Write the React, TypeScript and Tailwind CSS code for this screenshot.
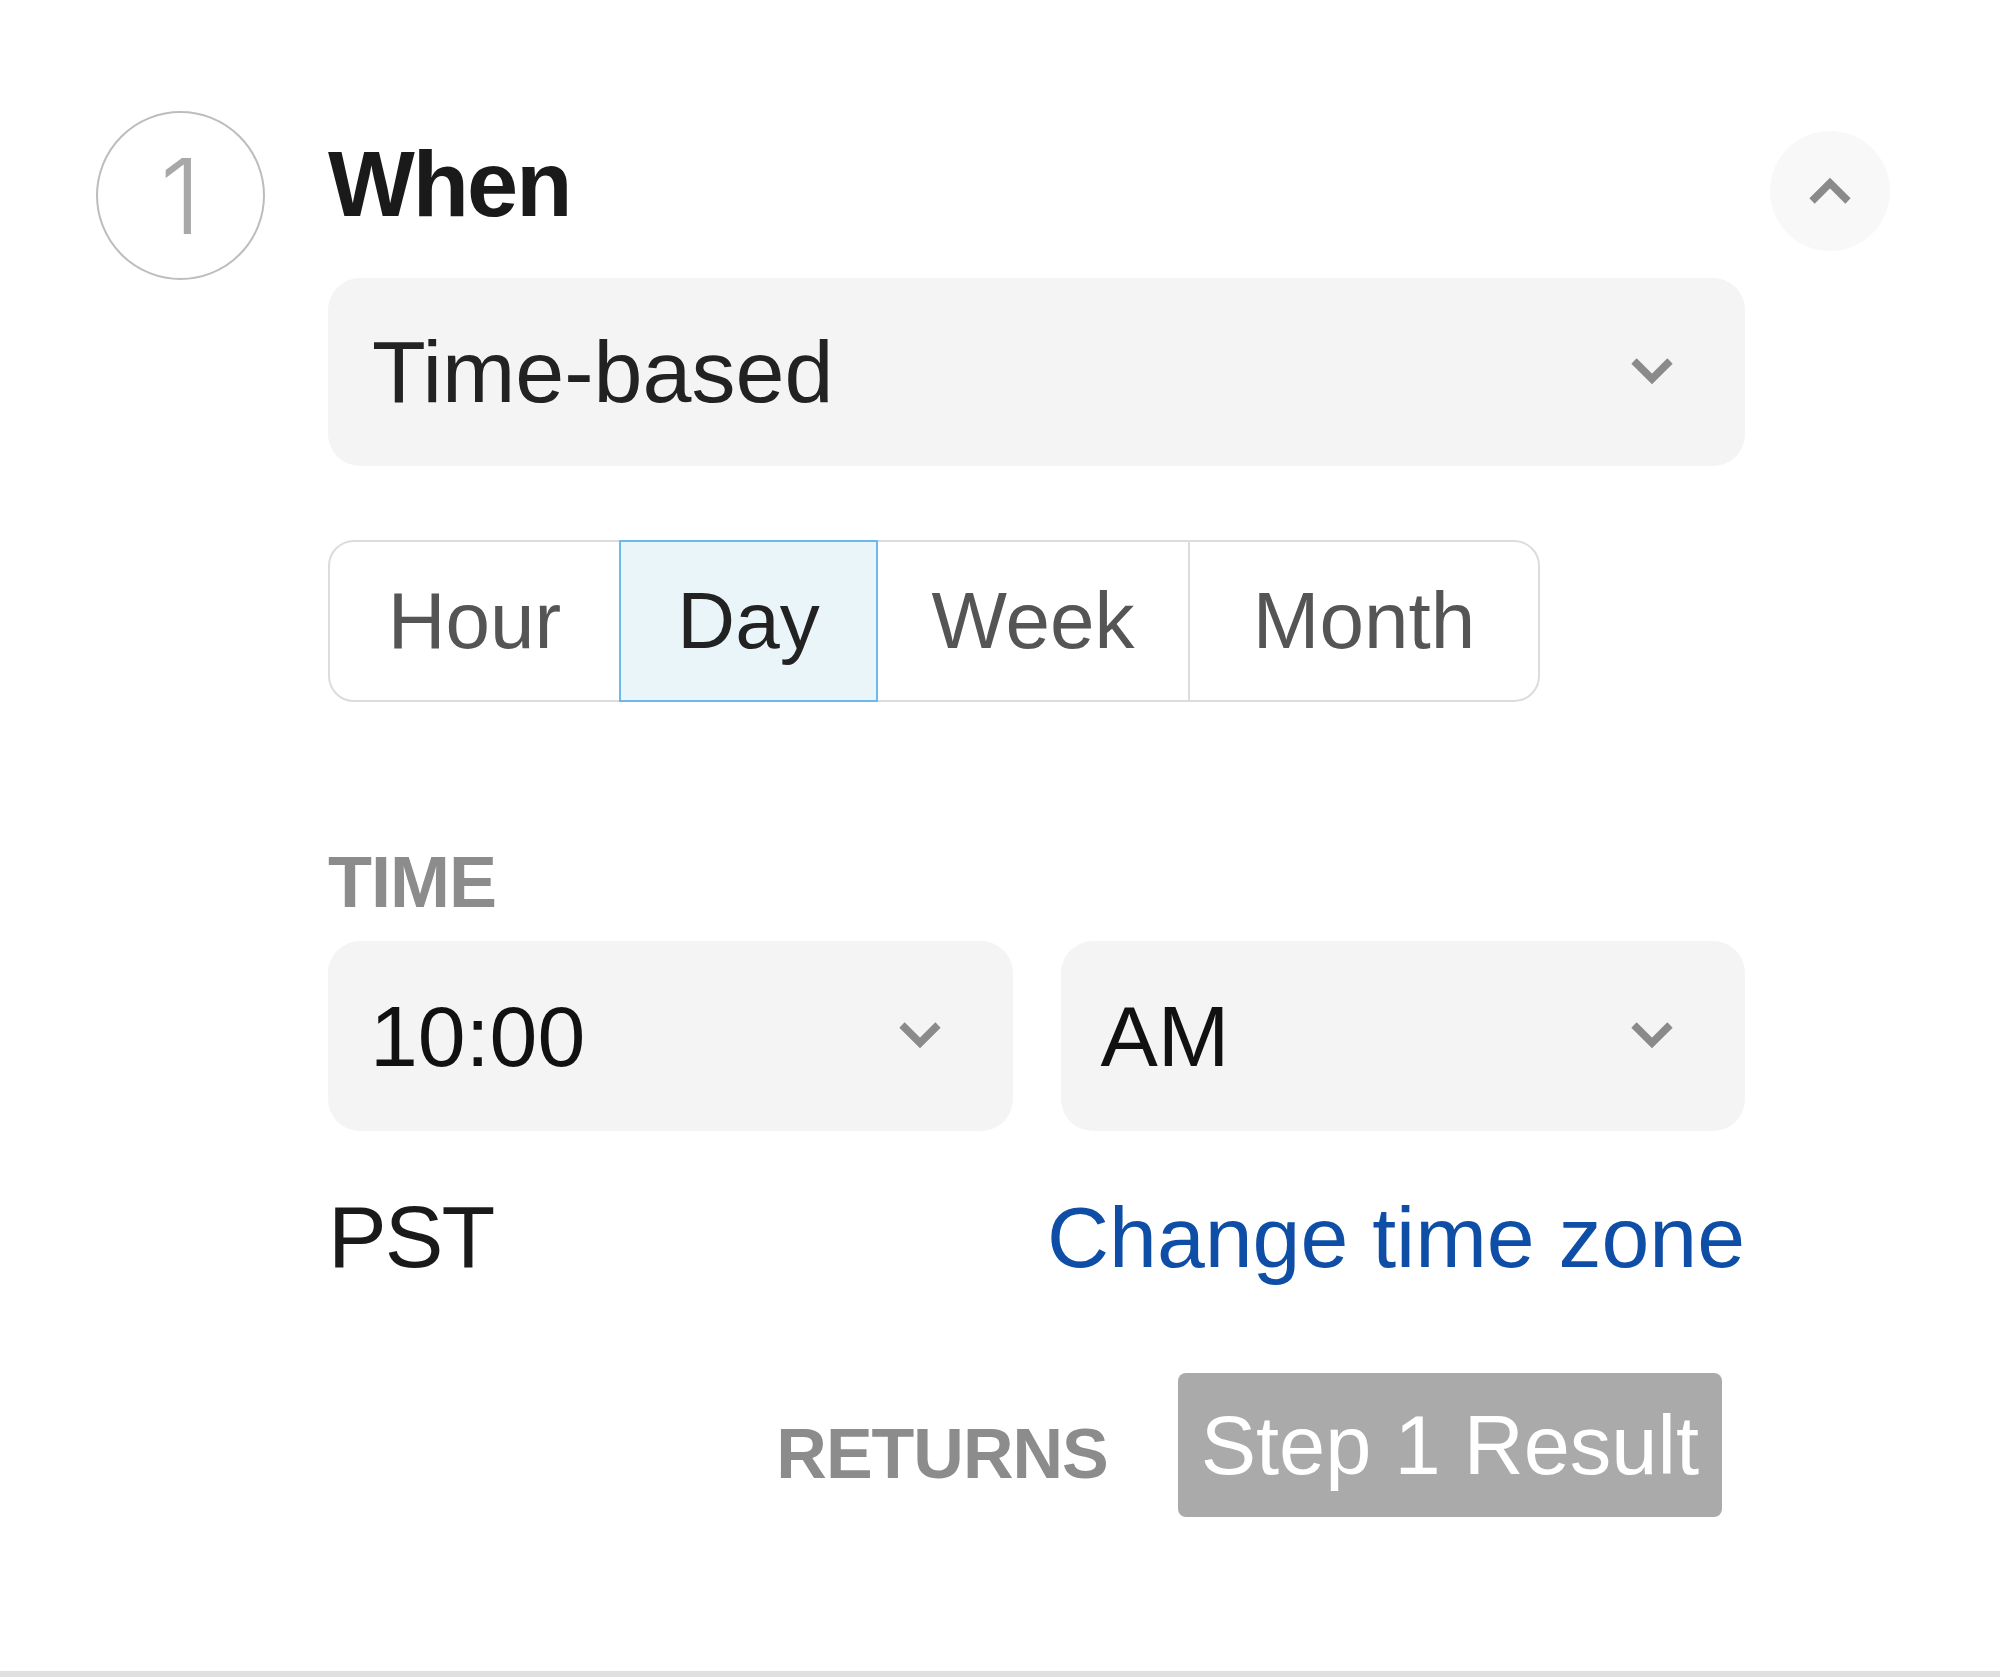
import React from "react";

const Chevron = ({ up = false, className = "" }: { up?: boolean; className?: string }) => (
  <svg viewBox="0 0 46 32" className={className} fill="none">
    <path
      d={up ? "M5 27 L23 9 L41 27" : "M5 5 L23 23 L41 5"}
      stroke="#8a8a8a"
      strokeWidth="7.5"
      strokeLinecap="butt"
      strokeLinejoin="miter"
    />
  </svg>
);

export default function App() {
  const font = { fontFamily: '"Liberation Sans", Arial, sans-serif' };
  return (
    <div
      className="w-[2000px] h-[1677px] bg-white border-b-[6px] border-[#e0e0e0] overflow-hidden"
      style={font}
    >
      <div className="flex pt-[111px] pl-[96px]">
        <div className="w-[169px] h-[169px] shrink-0 rounded-full border-2 border-[#bdbdbd] flex items-center justify-center">
          <span
            className="text-[104px] leading-none font-light text-[#a8a8a8]"
            style={{ fontFamily: "Inter, sans-serif" }}
          >
            1
          </span>
        </div>

        <div className="ml-[63px] w-[1417px] shrink-0 flex flex-col">
          <h2 className="mt-[27px] text-[92px] leading-none font-bold text-[#1a1a1a] tracking-[-2px]">
            When
          </h2>

          <div className="mt-[48px] h-[188px] rounded-[32px] bg-[#f4f4f4] flex items-center justify-between pl-[44px] pr-[70px]">
            <span className="text-[88px] leading-none text-[#222]">Time-based</span>
            <Chevron className="w-[46px] h-[32px]" />
          </div>

          <div className="mt-[74px] h-[162px] w-[1212px] flex rounded-[26px] border-2 border-[#dcdcdc]">
            <div className="w-[289px] flex items-center justify-center text-[80px] leading-none text-[#555]">
              Hour
            </div>
            <div className="w-[259px] flex items-center justify-center text-[80px] leading-none text-[#222] bg-[#eaf5fa] border-2 border-[#6bbbe8] -my-[2px]">
              Day
            </div>
            <div className="w-[312px] flex items-center justify-center text-[80px] leading-none text-[#555] border-r-2 border-[#dcdcdc]">
              Week
            </div>
            <div className="flex-1 flex items-center justify-center text-[80px] leading-none text-[#555]">
              Month
            </div>
          </div>

          <div className="mt-[144px] text-[72px] leading-none font-bold text-[#8c8c8c] tracking-[-1px]">
            TIME
          </div>

          <div className="mt-[23px] grid grid-cols-2 gap-[48px]">
            <div className="h-[190px] rounded-[32px] bg-[#f4f4f4] flex items-center justify-between pl-[42px] pr-[70px]">
              <span className="text-[86px] leading-none text-[#111]">10:00</span>
              <Chevron className="w-[46px] h-[32px]" />
            </div>
            <div className="h-[190px] rounded-[32px] bg-[#f4f4f4] flex items-center justify-between pl-[40px] pr-[70px]">
              <span className="text-[86px] leading-none text-[#111]">AM</span>
              <Chevron className="w-[46px] h-[32px]" />
            </div>
          </div>

          <div className="mt-[62px] flex items-baseline justify-between">
            <span className="text-[88px] leading-none text-[#1a1a1a] tracking-[-2px]">PST</span>
            <span className="text-[86px] leading-none text-[#0f4ea6]">Change time zone</span>
          </div>

          <div className="mt-[92px] flex items-center justify-end pr-[23px]">
            <span className="mt-[18px] text-[70px] leading-none font-bold text-[#8c8c8c] tracking-[-1px]">
              RETURNS
            </span>
            <span className="ml-[70px] h-[144px] px-[23px] rounded-[8px] bg-[#aaaaaa] text-white text-[83px] leading-none flex items-center">
              Step 1 Result
            </span>
          </div>
        </div>

        <div className="ml-[25px] mt-[20px] w-[120px] h-[120px] shrink-0 rounded-full bg-[#f8f8f8] flex items-center justify-center">
          <Chevron up className="w-[46px] h-[32px] -mt-[2px]" />
        </div>
      </div>
    </div>
  );
}
